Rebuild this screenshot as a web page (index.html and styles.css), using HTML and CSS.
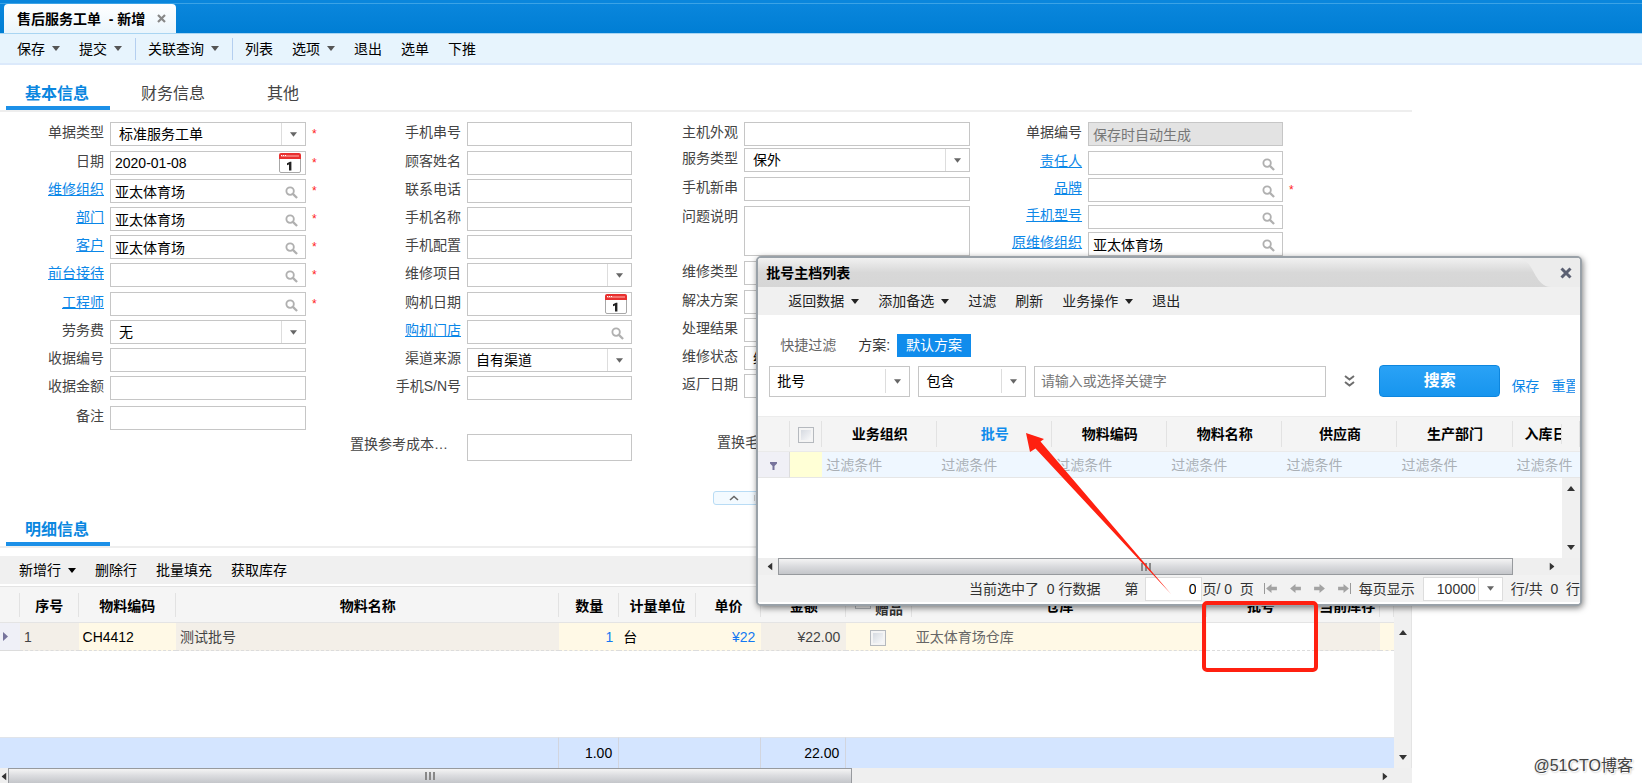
FILE: index.html
```html
<!DOCTYPE html>
<html lang="zh-CN">
<head>
<meta charset="utf-8">
<title>售后服务工单 - 新增</title>
<link rel="stylesheet" href="styles.css">
</head>
<body>
<svg class="defs" aria-hidden="true">
  <symbol id="i-search" viewBox="0 0 14 14"><circle cx="5.5" cy="5.5" r="4" fill="none" stroke="#b0b0b0" stroke-width="2"/><path d="M8.5 8.5L13 13" stroke="#b0b0b0" stroke-width="2.4"/></symbol>
  <symbol id="i-cal" viewBox="0 0 22 20"><rect x=".5" y="1.5" width="21" height="18" rx="1.5" fill="#fff" stroke="#a8a8a8"/><path d="M0 6V2q0-2 2-2h18q2 0 2 2v4z" fill="#e8302f"/><path d="M2 3h18" stroke="#f57470" stroke-width="2"/><path d="M2 2.5h6" stroke="#fff" stroke-dasharray="1 1"/><path d="M12.4 17.5H10v-6l-2 .8v-2l3-1.5h1.4z" fill="#222"/></symbol>
  <symbol id="i-down" viewBox="0 0 8 5"><path d="M0 0h8L4 5z" fill="currentColor"/></symbol>
  <symbol id="i-page" viewBox="0 0 12 10"><path d="M0 5l6-5v3h6v4H6v3z" fill="#a3a3a3"/></symbol>
</svg>

<div class="app">
  <header class="windowbar">
    <div class="doc-tab"><span>售后服务工单&nbsp; - 新增</span>
      <button class="icon-btn" aria-label="关闭"><svg width="9" height="9" viewBox="0 0 9 9"><path d="M1 1l7 7M8 1L1 8" stroke="#888" stroke-width="2.2"/></svg></button>
    </div>
  </header>

  <nav class="toolbar">
    <button>保存<svg class="tri"><use href="#i-down"/></svg></button>
    <button>提交<svg class="tri"><use href="#i-down"/></svg></button>
    <i class="sep"></i>
    <button>关联查询<svg class="tri"><use href="#i-down"/></svg></button>
    <i class="sep"></i>
    <button>列表</button>
    <button>选项<svg class="tri"><use href="#i-down"/></svg></button>
    <button>退出</button>
    <button>选单</button>
    <button>下推</button>
  </nav>

  <main class="content">
    <div class="tabs main-tabs">
      <button class="tab active">基本信息</button>
      <button class="tab">财务信息</button>
      <button class="tab">其他</button>
    </div>

    <form class="form">
      <div class="col col-a">
        <div class="row gap-l"><label for="a1">单据类型</label><div class="field"><select id="a1"><option>标准服务工单</option></select><span class="drop"><svg class="tri"><use href="#i-down"/></svg></span></div><b class="req">*</b></div>
        <div class="row"><label for="a2">日期</label><div class="field"><input id="a2" value="2020-01-08"><svg class="cal"><use href="#i-cal"/></svg></div><b class="req">*</b></div>
        <div class="row"><label for="a3"><a href="#">维修组织</a></label><div class="field"><input id="a3" value="亚太体育场"><svg class="mag"><use href="#i-search"/></svg></div><b class="req">*</b></div>
        <div class="row"><label for="a4"><a href="#">部门</a></label><div class="field"><input id="a4" value="亚太体育场"><svg class="mag"><use href="#i-search"/></svg></div><b class="req">*</b></div>
        <div class="row"><label for="a5"><a href="#">客户</a></label><div class="field"><input id="a5" value="亚太体育场"><svg class="mag"><use href="#i-search"/></svg></div><b class="req">*</b></div>
        <div class="row gap-l"><label for="a6"><a href="#">前台接待</a></label><div class="field"><input id="a6"><svg class="mag"><use href="#i-search"/></svg></div><b class="req">*</b></div>
        <div class="row"><label for="a7"><a href="#">工程师</a></label><div class="field"><input id="a7"><svg class="mag"><use href="#i-search"/></svg></div><b class="req">*</b></div>
        <div class="row"><label for="a8">劳务费</label><div class="field"><select id="a8"><option>无</option></select><span class="drop"><svg class="tri"><use href="#i-down"/></svg></span></div><b class="req"></b></div>
        <div class="row"><label for="a9">收据编号</label><div class="field"><input id="a9"></div><b class="req"></b></div>
        <div class="row gap-note"><label for="a10">收据金额</label><div class="field"><input id="a10"></div><b class="req"></b></div>
        <div class="row"><label for="a11">备注</label><div class="field"><input id="a11"></div><b class="req"></b></div>
      </div>

      <div class="col col-b">
        <div class="row gap-l"><label for="b1">手机串号</label><div class="field"><input id="b1"></div><b class="req"></b></div>
        <div class="row"><label for="b2">顾客姓名</label><div class="field"><input id="b2"></div><b class="req"></b></div>
        <div class="row"><label for="b3">联系电话</label><div class="field"><input id="b3"></div><b class="req"></b></div>
        <div class="row"><label for="b4">手机名称</label><div class="field"><input id="b4"></div><b class="req"></b></div>
        <div class="row"><label for="b5">手机配置</label><div class="field"><input id="b5"></div><b class="req"></b></div>
        <div class="row gap-l"><label for="b6">维修项目</label><div class="field"><select id="b6"><option></option></select><span class="drop"><svg class="tri"><use href="#i-down"/></svg></span></div><b class="req"></b></div>
        <div class="row"><label for="b7">购机日期</label><div class="field"><input id="b7"><svg class="cal"><use href="#i-cal"/></svg></div><b class="req"></b></div>
        <div class="row"><label for="b8"><a href="#">购机门店</a></label><div class="field"><input id="b8"><svg class="mag"><use href="#i-search"/></svg></div><b class="req"></b></div>
        <div class="row"><label for="b9">渠道来源</label><div class="field"><select id="b9"><option>自有渠道</option></select><span class="drop"><svg class="tri"><use href="#i-down"/></svg></span></div><b class="req"></b></div>
        <div class="row gap-block"><label for="b10">手机S/N号</label><div class="field"><input id="b10"></div><b class="req"></b></div>
        <div class="row cost"><label for="b11">置换参考成本…</label><div class="field"><input id="b11"></div><b class="req"></b></div>
      </div>

      <div class="col col-c">
        <div class="row gap-s"><label for="c1">主机外观</label><div class="field"><input id="c1"></div><b class="req"></b></div>
        <div class="row gap-l"><label for="c2">服务类型</label><div class="field"><select id="c2"><option>保外</option></select><span class="drop"><svg class="tri"><use href="#i-down"/></svg></span></div><b class="req"></b></div>
        <div class="row gap-l"><label for="c3">手机新串</label><div class="field"><input id="c3"></div><b class="req"></b></div>
        <div class="row gap-l memo"><label for="c4">问题说明</label><div class="field"><textarea id="c4"></textarea></div><b class="req"></b></div>
        <div class="row gap-l"><label for="c5">维修类型</label><div class="field"><input id="c5"></div><b class="req"></b></div>
        <div class="row"><label for="c6">解决方案</label><div class="field"><input id="c6"></div><b class="req"></b></div>
        <div class="row"><label for="c7">处理结果</label><div class="field"><input id="c7"></div><b class="req"></b></div>
        <div class="row"><label for="c8">维修状态</label><div class="field"><select id="c8"><option>维修中</option></select></div><b class="req"></b></div>
        <div class="row gap-block"><label for="c9">返厂日期</label><div class="field"><input id="c9"></div><b class="req"></b></div>
        <div class="row profit"><label for="c10">置换毛利</label><div class="field"><input id="c10"></div><b class="req"></b></div>
      </div>

      <div class="col col-d">
        <div class="row gap-l"><label for="d1">单据编号</label><div class="field locked"><input id="d1" value="保存时自动生成" disabled></div><b class="req"></b></div>
        <div class="row"><label for="d2"><a href="#">责任人</a></label><div class="field"><input id="d2"><svg class="mag"><use href="#i-search"/></svg></div><b class="req"></b></div>
        <div class="row"><label for="d3"><a href="#">品牌</a></label><div class="field"><input id="d3"><svg class="mag"><use href="#i-search"/></svg></div><b class="req">*</b></div>
        <div class="row"><label for="d4"><a href="#">手机型号</a></label><div class="field"><input id="d4"><svg class="mag"><use href="#i-search"/></svg></div><b class="req"></b></div>
        <div class="row"><label for="d5"><a href="#">原维修组织</a></label><div class="field"><input id="d5" value="亚太体育场"><svg class="mag"><use href="#i-search"/></svg></div><b class="req"></b></div>
      </div>
    </form>

    <div class="fold">
      <button aria-label="收起"><svg width="10" height="6" viewBox="0 0 10 6"><path d="M1 5l4-3.500 4 3.500" fill="none" stroke="#666" stroke-width="1.600"/></svg></button>
      <button aria-label="展开"><svg width="10" height="6" viewBox="0 0 10 6"><path d="M1 1l4 3.500L9 1" fill="none" stroke="#666" stroke-width="1.600"/></svg></button>
    </div>

    <div class="tabs detail-tabs"><button class="tab active">明细信息</button></div>

    <nav class="subbar">
      <button>新增行<svg class="tri"><use href="#i-down"/></svg></button>
      <button>删除行</button>
      <button>批量填充</button>
      <button>获取库存</button>
    </nav>

    <div class="grid">
      <table class="items">
        <colgroup><col class="w20"><col class="w58"><col class="w97"><col class="w384"><col class="w60"><col class="w76"><col class="w65"><col class="w85"><col class="w66"><col class="w295"><col class="w107"><col class="w66"><col class="w14"></colgroup>
        <thead><tr><th></th><th>序号</th><th>物料编码</th><th>物料名称</th><th>数量</th><th>计量单位</th><th>单价</th><th>金额</th><th class="gift"><label><input type="checkbox" class="box"><span>赠品</span></label></th><th>仓库</th><th>批号</th><th>当前库存</th><th></th></tr></thead>
        <tbody>
          <tr class="line"><td class="mark"><svg width="5" height="9" viewBox="0 0 5 9"><path d="M0 0l5 4.500L0 9z" fill="#77749c"/></svg></td><td class="ro">1</td><td class="code">CH4412</td><td class="ro">测试批号</td><td class="num blue">1</td><td class="unit">台</td><td class="num blue">¥22</td><td class="num ro">¥22.00</td><td class="mid"><input type="checkbox" class="box" aria-label="赠品"></td><td class="store">亚太体育场仓库</td><td class="empty"></td><td class="ro"></td><td></td></tr>
          <tr class="space"><td colspan="13"></td></tr>
        </tbody>
        <tfoot><tr><td colspan="4"></td><td>1.00</td><td colspan="2"></td><td>22.00</td><td colspan="5" class="last"></td></tr></tfoot>
      </table>
      <div class="vscroll"><svg class="tri up"><use href="#i-down"/></svg><svg class="tri"><use href="#i-down"/></svg></div>
      <div class="hscroll"><svg class="tri left"><use href="#i-down"/></svg><div class="track"><div class="thumb"><i class="grip"></i></div></div><svg class="tri right"><use href="#i-down"/></svg></div>
    </div>
  </main>

  <section class="dialog" role="dialog" aria-labelledby="dlg-title">
    <header class="dlg-head">
      <h2 id="dlg-title">批号主档列表</h2>
      <svg class="swoosh" width="62" height="29" viewBox="0 0 62 29"><path d="M0 0H62V29H32C14 28 16 2 0 0z" fill="#ececec"/></svg>
      <button class="icon-btn" aria-label="关闭"><svg width="12" height="12" viewBox="0 0 12 12"><path d="M1.500 1.500l9 9M10.500 1.500l-9 9" stroke="#5b6072" stroke-width="3"/></svg></button>
    </header>
    <nav class="dlg-bar">
      <button>返回数据<svg class="tri"><use href="#i-down"/></svg></button>
      <button>添加备选<svg class="tri"><use href="#i-down"/></svg></button>
      <button>过滤</button>
      <button>刷新</button>
      <button>业务操作<svg class="tri"><use href="#i-down"/></svg></button>
      <button>退出</button>
    </nav>
    <div class="scheme"><span class="quick">快捷过滤</span><span class="plan">方案:</span><button class="plan-btn">默认方案</button></div>
    <div class="filter">
      <div class="field f-key"><select aria-label="字段"><option>批号</option></select><span class="drop"><svg class="tri"><use href="#i-down"/></svg></span></div>
      <div class="field f-op"><select aria-label="条件"><option>包含</option></select><span class="drop"><svg class="tri"><use href="#i-down"/></svg></span></div>
      <div class="field f-text"><input placeholder="请输入或选择关键字" aria-label="关键字"></div>
      <button class="icon-btn more" aria-label="更多"><svg width="11" height="12" viewBox="0 0 11 12"><path d="M1 1l4.500 3.500L10 1M1 7l4.500 3.500L10 7" fill="none" stroke="#6e6e6e" stroke-width="2"/></svg></button>
      <button class="search">搜索</button>
      <div class="links"><a href="#">保存</a><a href="#">重置</a></div>
    </div>
    <table class="lots">
      <colgroup><col class="v32"><col class="v32"><col class="v115"><col class="v115"><col class="v115"><col class="v115"><col class="v115"><col class="v115"><col></colgroup>
      <thead><tr><th></th><th><input type="checkbox" class="box" aria-label="全选"></th><th>业务组织</th><th class="blue">批号</th><th>物料编码</th><th>物料名称</th><th>供应商</th><th>生产部门</th><th class="cut"><div><span>入库日期</span></div></th></tr></thead>
      <tbody><tr><td class="fn"><svg width="7" height="8" viewBox="0 0 7 8"><path d="M0 0h7v1.500L4.500 4v4h-2V4L0 1.500z" fill="#77749c"/></svg></td><td class="yl"></td><td><input placeholder="过滤条件" aria-label="业务组织"></td><td><input placeholder="过滤条件" aria-label="批号"></td><td><input placeholder="过滤条件" aria-label="物料编码"></td><td><input placeholder="过滤条件" aria-label="物料名称"></td><td><input placeholder="过滤条件" aria-label="供应商"></td><td><input placeholder="过滤条件" aria-label="生产部门"></td><td><input placeholder="过滤条件" aria-label="入库日期"></td></tr></tbody>
    </table>
    <div class="lot-body"><div class="vscroll"><svg class="tri up"><use href="#i-down"/></svg><svg class="tri"><use href="#i-down"/></svg></div></div>
    <div class="hscroll"><svg class="tri left"><use href="#i-down"/></svg><div class="track"><div class="thumb"><i class="grip"></i></div></div><svg class="tri right"><use href="#i-down"/></svg></div>
    <footer class="pager">
      <span class="picked">当前选中了&nbsp; 0 行数据</span>
      <label for="pg">第</label><input id="pg" value="0"><span>页/ 0&nbsp; 页</span>
      <div class="pages">
        <button class="icon-btn" aria-label="首页"><i class="bar"></i><svg class="pg"><use href="#i-page"/></svg></button>
        <button class="icon-btn" aria-label="上一页"><svg class="pg"><use href="#i-page"/></svg></button>
        <button class="icon-btn flip" aria-label="下一页"><svg class="pg"><use href="#i-page"/></svg></button>
        <button class="icon-btn flip" aria-label="末页"><i class="bar"></i><svg class="pg"><use href="#i-page"/></svg></button>
      </div>
      <label for="ps">每页显示</label>
      <div class="field size"><select id="ps"><option>10000</option></select><span class="drop"><svg class="tri"><use href="#i-down"/></svg></span></div>
      <span>行/共&nbsp; 0&nbsp; 行</span>
    </footer>
  </section>

  <div class="mark-box"></div>
  <svg class="mark-arrow" width="146" height="162" viewBox="0 0 146 162"><path d="M0 0L18 6L14.500 8.500L145 161L9.500 15.500L4 19z" fill="#ff2010"/></svg>
  <div class="watermark">@51CTO博客</div>
</div>
</body>
</html>
```

FILE: styles.css
```css
* { box-sizing: border-box; }
body, button, input, select, textarea, table {
  font-family: "Liberation Sans", "Noto Sans CJK SC", sans-serif;
  font-size: 14px;
}
body { margin: 0; background: #fff; color: #000; line-height: 20px; }
button { border: 0; background: none; padding: 0; color: inherit; line-height: 20px; white-space: nowrap; }
input, select, textarea { border: 0; background: none; margin: 0; padding: 0; color: #000; min-width: 0; outline: 0; }
select { appearance: none; }
select:disabled, input:disabled { opacity: 1; }
a { color: #0b87e8; }
.defs { position: absolute; width: 0; height: 0; }
.app { position: relative; min-height: 100vh; overflow: hidden; }
.tri { width: 8px; height: 5px; flex: none; }
.up { transform: rotate(180deg); }
.left { transform: rotate(90deg); }
.right { transform: rotate(-90deg); }
.icon-btn { display: flex; align-items: center; }

/* window bar */
.windowbar { height: 33px; padding: 4px 0 0 4px; background: linear-gradient(#0a86dc 0 3px, #3ba3e6 3px 4px, #0a86dc 4px, #007ed4); }
.doc-tab { display: inline-flex; align-items: center; gap: 12px; height: 29px; padding: 0 10px 0 13px; border-radius: 4px 4px 0 0; background: linear-gradient(#fff, #eaf5fc); font-weight: bold; white-space: nowrap; }
.toolbar { display: flex; align-items: center; height: 32px; padding-left: 17px; background: #e7f4fd; border-top: 1px solid #a9d5f2; border-bottom: 2px solid #dbe9fb; }
.toolbar button, .subbar button, .dlg-bar button { display: flex; align-items: center; gap: 7px; margin-right: 19px; }
.toolbar .tri { color: #555; }
.toolbar .sep { width: 1px; height: 22px; background: #b4cff0; margin: 0 12px 0 -6px; }

/* tabs */
.content { width: 86%; }
.tabs { display: flex; align-items: flex-end; padding-left: 6px; border-bottom: 2px solid #eee; }
.main-tabs { height: 47px; }
.detail-tabs { height: 43px; }
.tab { padding: 0 31px; border-bottom: 4px solid transparent; font-size: 16px; line-height: 24px; color: #444; }
.tab.active { padding: 0 21px 0 19px; border-color: #1c90e8; color: #0b87e0; font-weight: bold; }

/* form */
.form { display: grid; grid-template-columns: 322fr 326fr 338fr 313fr 113fr; padding-top: 10px; }
.row { display: flex; margin-bottom: 4px; min-height: 24px; }
.row label { flex: none; padding-right: 6px; text-align: right; color: #444; white-space: nowrap; }
.col-a label { width: 110px; }
.col-b label { width: 145px; }
.col-c label { width: 96px; }
.col-d label { width: 102px; }
.col-d .row { margin-bottom: 3px; }
.form .gap-s { margin-bottom: 2px; }
.form .gap-l { margin-bottom: 5px; }
.form .gap-note { margin-bottom: 6px; }
.form .gap-block { margin-bottom: 34px; }
.field { display: flex; align-items: center; flex: 1; min-width: 0; height: 24px; border: 1px solid #c6c6c6; background: #fff; }
.field input { flex: 1; width: 0; padding-left: 4px; }
.field select { flex: 1; padding-left: 8px; height: 100%; }
.field textarea { flex: 1; height: 100%; resize: none; }
.field .drop { display: flex; align-items: center; justify-content: center; width: 24px; height: 100%; border-left: 1px solid #ddd; color: #666; }
.field .tri { width: 7px; }
.mag { width: 13px; height: 13px; margin: 3px 7px 0 0; }
.cal { width: 22px; height: 20px; margin-right: 4px; }
.locked { background: #e3e3e3; }
.locked input { color: #777; }
.req { width: 16px; padding-left: 6px; color: #f22; font-weight: normal; font-size: 12px; line-height: 24px; }
.memo .field { height: 50px; }
.cost .field { height: 27px; }
.row.cost, .row.profit { margin-bottom: 0; }
.cost label { padding-right: 19px; }
.profit label { width: 140px; padding-left: 69px; text-align: left; }

.fold { display: flex; align-items: center; width: 82px; height: 14px; margin: 30px 0 0 50.5%; border: 1px solid #b9dcf5; border-radius: 3px; background: #f3faff; }
.fold button { flex: 1; display: flex; justify-content: center; }
.fold button + button { border-left: 1px solid #ccc; }

/* detail grid */
.subbar { display: flex; align-items: center; height: 28px; margin: 8px 0 2px; padding-left: 19px; background: #f0f0f0; }
.grid { display: grid; grid-template-columns: minmax(0, 1fr) 18px; }
.items { width: 100%; table-layout: fixed; border-collapse: separate; border-spacing: 0; }
.w20 { width: 20px; } .w58 { width: 4.200%; } .w97 { width: 7%; } .w384 { width: 27.500%; }
.w60 { width: 4.300%; } .w76 { width: 5.500%; } .w65 { width: 4.700%; } .w85 { width: 6.100%; }
.w66 { width: 4.700%; } .w295 { width: 21.200%; } .w107 { width: 7.700%; } .w14 { width: 14px; }
.items th { height: 37px; padding: 2px 0 0; border-top: 1px solid #e4e4e4; border-bottom: 1px solid #e4e4e4; background: linear-gradient(#e2e2e2, #e2e2e2) right center / 1px 24px no-repeat #f5f5f5; white-space: nowrap; }
.gift label { display: flex; justify-content: center; gap: 4px; color: #333; }
.gift span { padding-top: 6px; }
.box { appearance: none; width: 16px; height: 16px; border: 1px solid #b5b9be; background: linear-gradient(135deg, #cfd4dc, #fff); box-shadow: inset 0 0 0 2px #f4f4f4; vertical-align: middle; }
.items td { padding: 0 6px 0 4px; white-space: nowrap; }
.line td { height: 28px; background: #fff9e6; border-bottom: 1px dashed #dcdcdc; }
.line .ro { background: #f3efe8; color: #444; }
.line .mark { padding: 0 3px; background: #eff0f7; border-bottom-style: solid; }
.line .mark svg { display: block; }
.line .blue { color: #1479f2; }
.line .num { text-align: right; }
.line .mid { text-align: center; }
.line .store { color: #666; }
.line .empty { background: #fff; }
.space td { height: 86px; }
.items tfoot td { height: 31px; background: #d4e5ff; border-top: 1px solid #e0e4ea; border-right: 1px solid #d2d5de; text-align: right; padding-right: 6px; }
.items tfoot .last { border-right: 0; }
.vscroll { display: flex; flex-direction: column; align-items: center; justify-content: space-between; width: 18px; padding: 8px 0; background: #f0f0f0; color: #333; }
.grid .vscroll { padding-top: 44px; border-right: 1px solid #e4e4e4; }
.hscroll { display: flex; align-items: center; background: #efefef; color: #333; }
.grid .hscroll { grid-column: 1 / -1; height: 16px; padding-right: 23px; }
.track { flex: 1; height: 100%; }
.thumb { display: flex; align-items: center; justify-content: center; height: 100%; border: 1px solid #979a9e; background: linear-gradient(#f4f4f4, #dcdde0 45%, #c4c6ca); }
.grid .thumb { width: 61.500%; }
.grip { width: 10px; height: 8px; background: repeating-linear-gradient(90deg, #888 0 2px, transparent 2px 4px); }

/* dialog */
.dialog { position: absolute; left: 46.050%; top: 256px; width: 50.300%; border: 2px solid #99a1a8; border-radius: 5px; background: #fff; box-shadow: 1px 2px 6px rgba(0, 0, 0, .5); overflow: hidden; }
.dlg-head { display: flex; align-items: center; height: 29px; padding: 0 8px; background: linear-gradient(#f1f1f1, #d8d8d8 50%, #d6d6d6); }
.dlg-head h2 { flex: 1; margin: 0; font-size: 14px; line-height: 20px; }
.dlg-head .swoosh { margin-right: -21px; }
.dlg-head .icon-btn { z-index: 1; }
.swoosh { flex: none; }
.dlg-bar { display: flex; align-items: center; height: 28px; padding-left: 30px; background: #f0f0f0; color: #222; }
.scheme { display: flex; align-items: center; height: 24px; margin-top: 18px; padding-left: 22px; color: #333; }
.quick { color: #666; margin-right: 22px; }
.plan { margin-right: 7px; }
.plan-btn { height: 23px; padding: 0 9px; background: #108cec; color: #fff; }
.filter { display: flex; align-items: center; margin: 8px 0 19px; padding: 0 5px 0 11px; }
.filter .field { height: 31px; }
.filter .f-key { flex: 0 1 142px; margin-right: 8px; }
.filter .f-op { flex: 0 1 108px; margin-right: 8px; }
.filter .f-text { flex: 1 1 294px; }
.filter select { padding-left: 7px; }
.filter .f-text input { padding-left: 6px; }
.filter .drop { height: 24px; }
::placeholder { color: #777; opacity: 1; }
.more { margin: 0 24px 0 18px; }
.search { flex: none; width: 121px; height: 32px; border: 1px solid #0d86de; border-radius: 4px; background: linear-gradient(#2aa2f6, #1795ee); color: #fff; font-size: 16px; font-weight: bold; }
.links { display: flex; gap: 12px; width: 64px; margin: 10px 0 0 11px; overflow: hidden; white-space: nowrap; }
.links a { flex: none; text-decoration: none; }
.lots { width: 100%; table-layout: fixed; border-spacing: 0; border-top: 1px solid #ececec; }
.v32 { width: 32px; } .v115 { width: 14%; }
.lots th { height: 35px; padding: 0; background: linear-gradient(#e2e2e2, #e2e2e2) right center / 1px 26px no-repeat #f4f4f4; border-bottom: 1px solid #eaeaea; }
.lots th.blue { color: #108cec; }
.cut div { width: 49px; padding-left: 12px; overflow: hidden; white-space: nowrap; text-align: left; border-right: 1px solid #e2e2e2; }
.cut span { display: block; }
.lots td { height: 26px; padding: 0; background: #eff7ff; border-bottom: 1px solid #e6e6e6; }
.lots td input { width: 100%; padding-left: 4px; }
.lots ::placeholder { color: #aab0b6; }
.lots .fn { background: #f0f0f6; text-align: center; border-right: 1px solid #ddd; }
.lots .yl { background: #ffffd6; }
.lot-body { display: flex; justify-content: flex-end; height: 80px; }
.dialog .hscroll { height: 17px; padding: 0 24px 0 8px; }
.dialog .track { padding: 0 35px 0 4px; }
.pager { display: flex; align-items: center; justify-content: flex-end; height: 29px; background: #f2f2f2; border-bottom: 2px solid #fff; color: #333; white-space: nowrap; }
.picked { margin-right: 24px; }
.pager > input { width: 57px; height: 24px; margin-left: 7px; padding-right: 5px; border: 1px solid #ddd; background: #fff; text-align: right; }
.pages { display: flex; gap: 13px; margin: 0 8px 0 10px; }
.pages .icon-btn { gap: 1px; }
.flip { transform: rotate(180deg); }
.pg { width: 11px; height: 9px; }
.bar { width: 1px; height: 11px; background: #999; }
.size { flex: none; width: 80px; margin: 0 8px; border-color: #ddd; }
.size select { padding-left: 13px; color: #333; }

/* annotations */
.mark-box { position: absolute; left: 1202px; top: 601px; width: 116px; height: 71px; border: 4px solid #ff2010; border-radius: 5px; }
.mark-arrow { position: absolute; left: 1026px; top: 433px; }
.watermark { position: absolute; right: 9px; bottom: 8px; font-size: 16px; color: #444; text-shadow: 1px 1px 0 #fff, 1px 1px 2px #999; }
```
